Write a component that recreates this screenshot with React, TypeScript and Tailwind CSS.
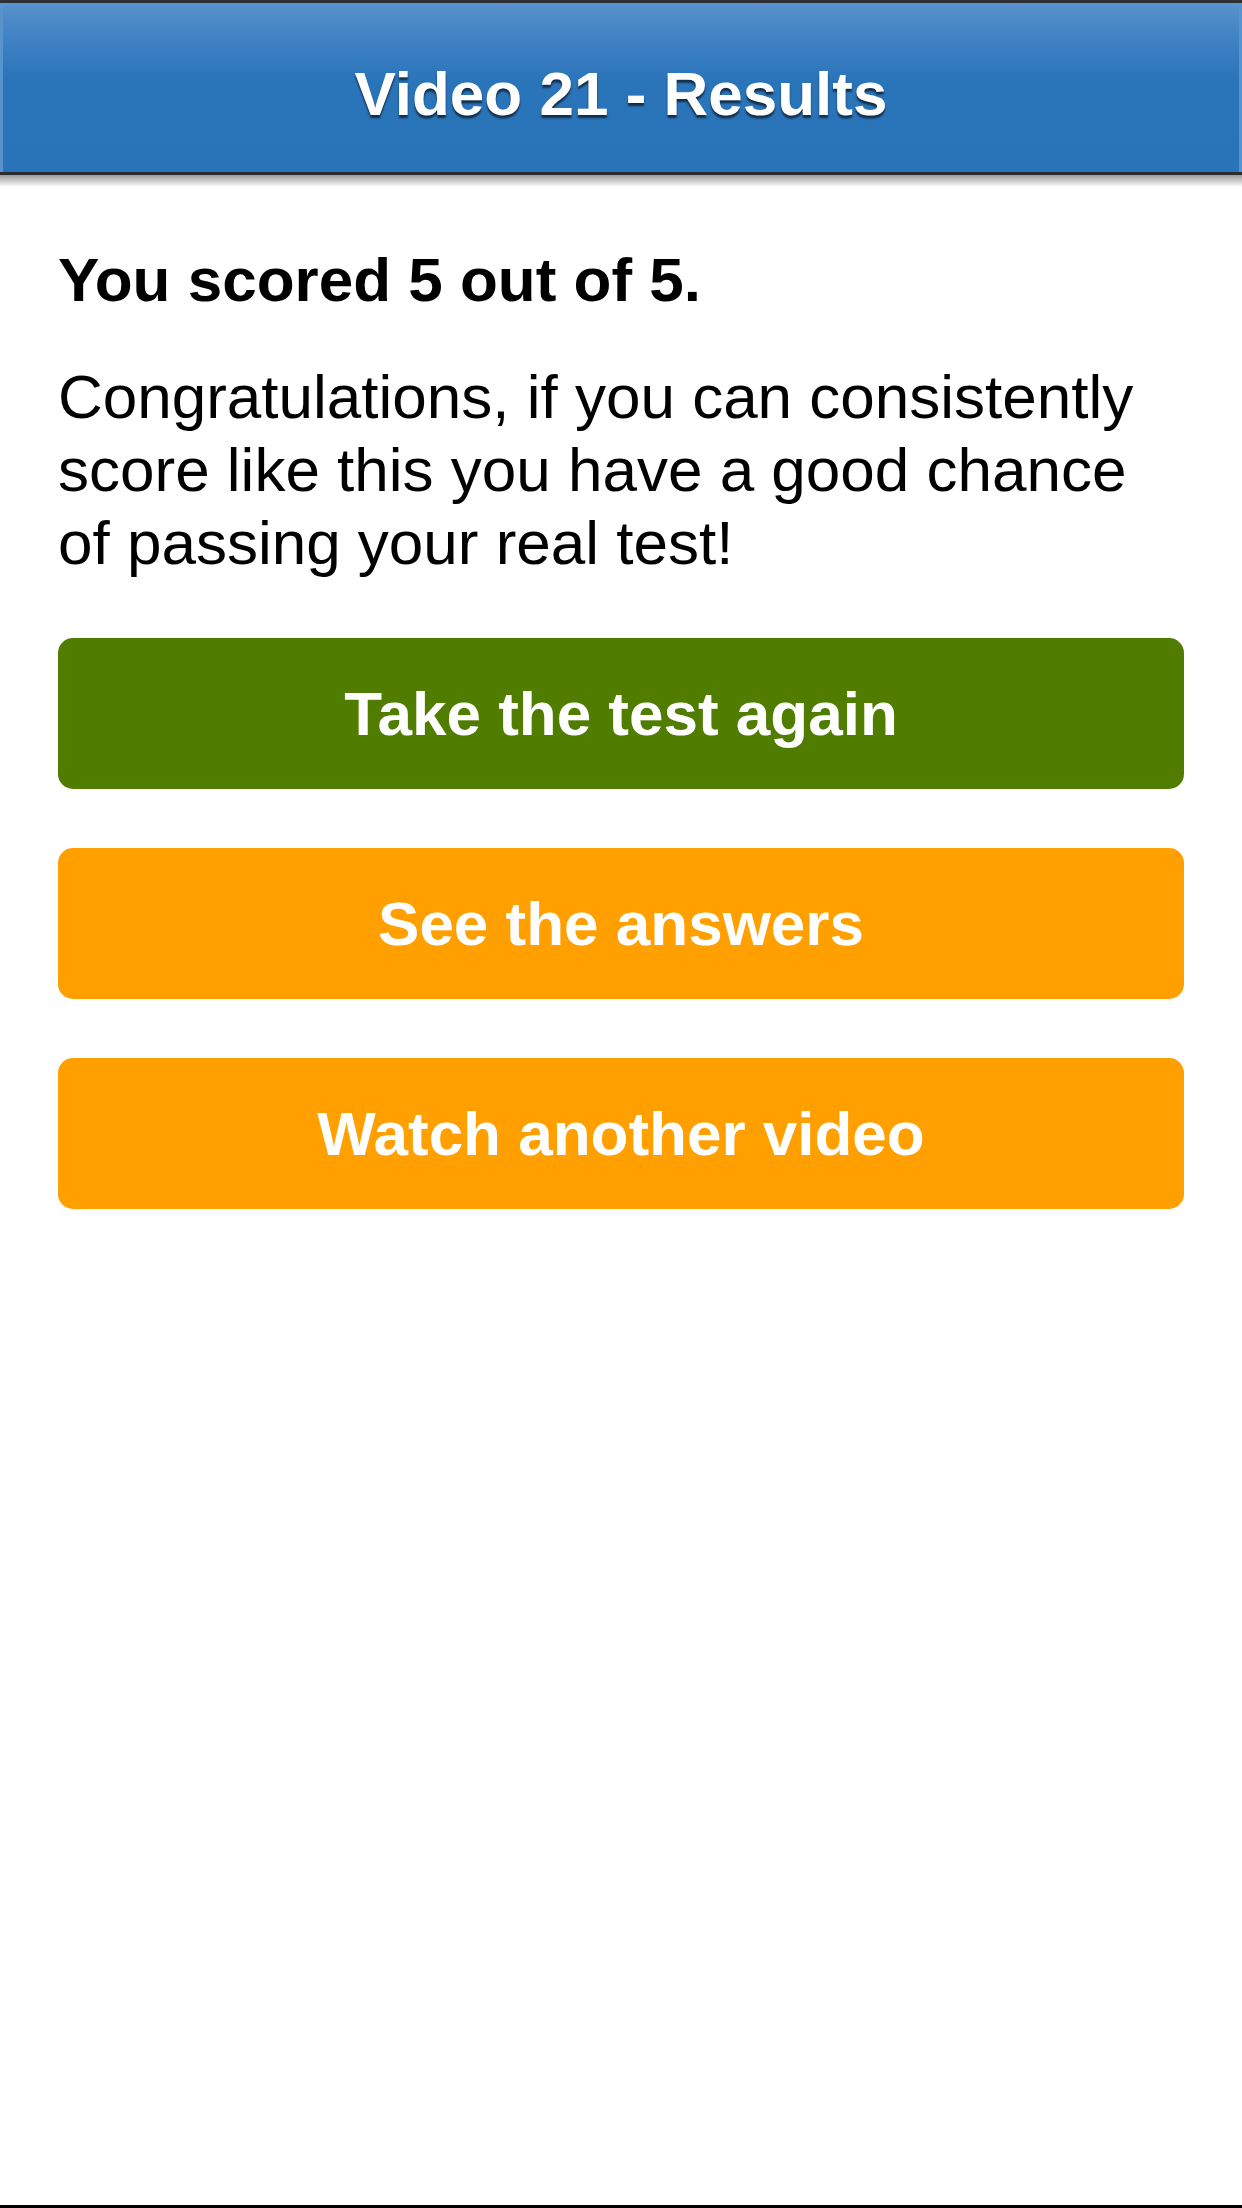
import React from 'react';

const buttons = [
  { label: 'Take the test again', className: 'bg-[#507c00]' },
  { label: 'See the answers', className: 'bg-[#ff9f00]' },
  { label: 'Watch another video', className: 'bg-[#ff9f00]' },
];

export default function App() {
  return (
    <div className="flex h-[2208px] w-[1242px] flex-col bg-white font-['Liberation_Sans',Arial,sans-serif] text-black">
      {/* Header bar */}
      <header className="flex flex-col">
        <div className="h-[3px] bg-[#2f3033]" />
        <div className="flex h-[169px] items-center justify-center border-x-[3px] border-t-[3px] border-[#5793cd] bg-[linear-gradient(to_bottom,#5590cb_0%,#3f82c4_20%,#2a74ba_45%,#2973b9_100%)] pt-[10px]">
          <h1 className="text-[62px] font-bold leading-[1.2] text-white [text-shadow:0_3px_2px_rgba(0,0,0,0.6)]">
            Video 21 - Results
          </h1>
        </div>
        <div className="h-[3px] bg-[#2c2d30]" />
        <div className="h-[12px] bg-[linear-gradient(to_bottom,#9a9a9a,#d8d8d8_60%,#ffffff)]" />
      </header>

      {/* Content */}
      <main className="flex flex-1 flex-col px-[58px] pt-[56px]">
        <h2 className="text-[62px] font-bold leading-[73px]">You scored 5 out of 5.</h2>
        <p className="mt-[44px] text-[62px] leading-[73px]">
          Congratulations, if you can consistently score like this you have a good chance of passing your real test!
        </p>
        <div className="mt-[59px] flex flex-col gap-[59px]">
          {buttons.map((b) => (
            <button
              key={b.label}
              className={`flex h-[151px] w-full items-center justify-center rounded-[15px] text-[62px] font-bold leading-none text-white ${b.className}`}
            >
              {b.label}
            </button>
          ))}
        </div>
      </main>

      <div className="h-[3px] bg-black" />
    </div>
  );
}
